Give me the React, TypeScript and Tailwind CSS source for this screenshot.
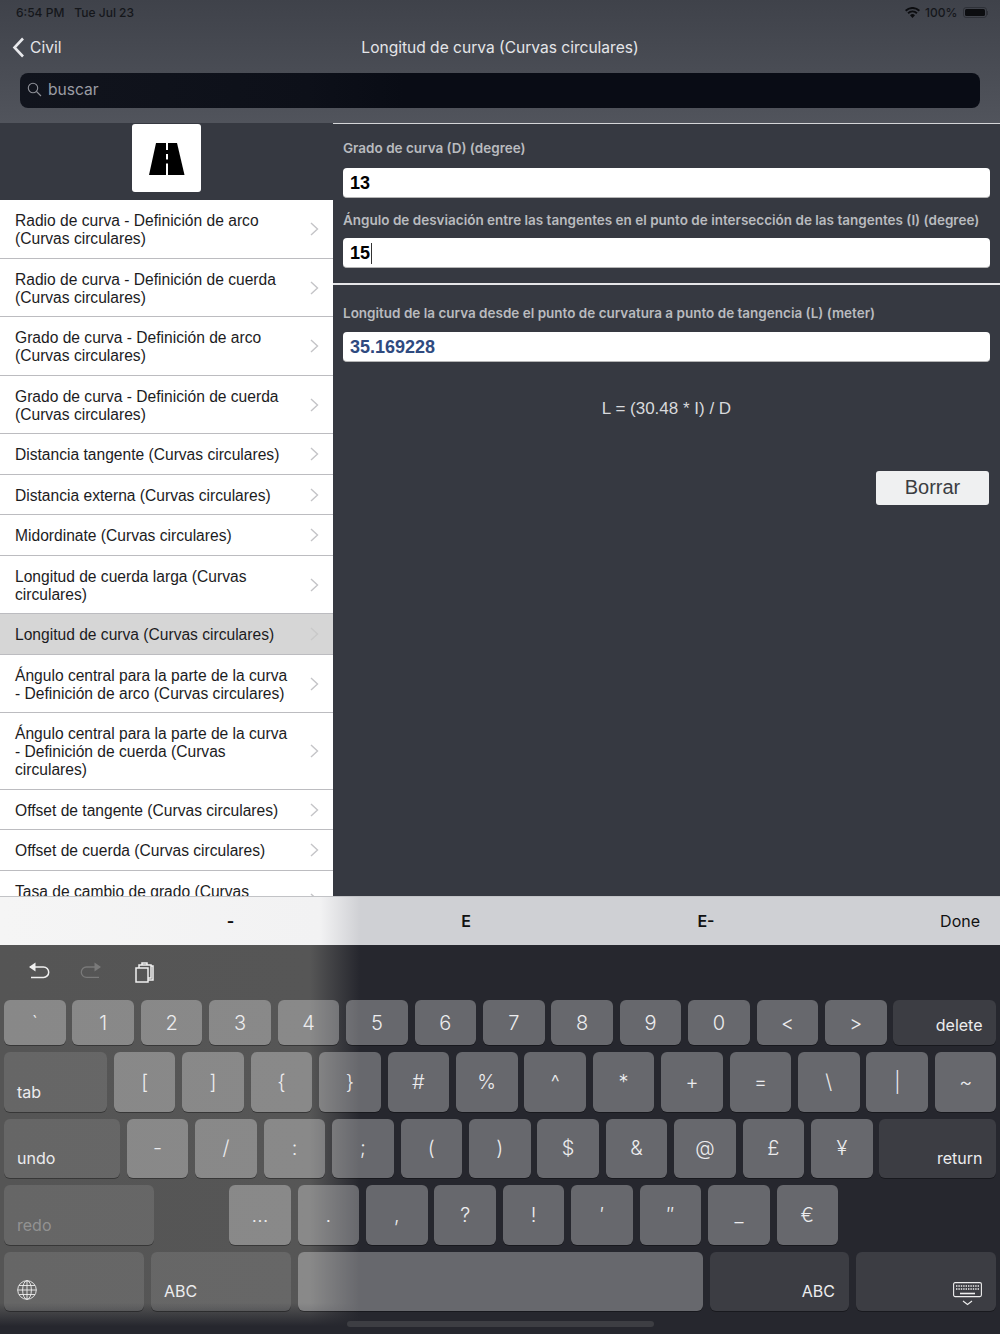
import { ReactNode } from 'react'

const listItems = [
  { label: 'Radio de curva - Definición de arco\n(Curvas circulares)', h: 'h-[59px]' },
  { label: 'Radio de curva - Definición de cuerda\n(Curvas circulares)', h: 'h-[58px]' },
  { label: 'Grado de curva - Definición de arco\n(Curvas circulares)', h: 'h-[59px]' },
  { label: 'Grado de curva - Definición de cuerda\n(Curvas circulares)', h: 'h-[58px]' },
  { label: 'Distancia tangente (Curvas circulares)', h: 'h-[41px]' },
  { label: 'Distancia externa (Curvas circulares)', h: 'h-[40px]' },
  { label: 'Midordinate (Curvas circulares)', h: 'h-[41px]' },
  { label: 'Longitud de cuerda larga (Curvas\ncirculares)', h: 'h-[58px]' },
  { label: 'Longitud de curva (Curvas circulares)', h: 'h-[41px]', active: true },
  { label: 'Ángulo central para la parte de la curva\n- Definición de arco (Curvas circulares)', h: 'h-[58px]' },
  { label: 'Ángulo central para la parte de la curva\n- Definición de cuerda (Curvas\ncirculares)', h: 'h-[77px]' },
  { label: 'Offset de tangente (Curvas circulares)', h: 'h-[40px]' },
  { label: 'Offset de cuerda (Curvas circulares)', h: 'h-[41px]' },
  { label: 'Tasa de cambio de grado (Curvas\ncirculares)', h: 'h-[58px]' },
]

function ListRow({ label, h, active }: { label: string; h: string; active?: boolean }) {
  return (
    <div className={`${h} shrink-0 flex items-center justify-between pl-[15px] pr-[14px] pt-[2px] border-b border-[#bcbcc0] ${active ? 'bg-[#d6d6d6]' : 'bg-white'}`}>
      <span className="whitespace-pre-line text-[15.6px] leading-[18px] text-[#1c1c1e] font-['Liberation_Sans',sans-serif]">{label}</span>
      <svg width="9" height="14" viewBox="0 0 9 14" fill="none" className="shrink-0 -mt-[2px]">
        <path d="M1 1l6.5 6L1 13" stroke={active ? '#c9c9c9' : '#c4c4c7'} strokeWidth="1.4" />
      </svg>
    </div>
  )
}

function Field({ label, value, blue, caret, inputGap }: { label: string; value: string; blue?: boolean; caret?: boolean; inputGap: string }) {
  return (
    <div>
      <div className="text-[13.5px] leading-[16px] font-semibold text-[#b9bbbf]">{label}</div>
      <div className={`${inputGap} h-[30px] pt-[2px] rounded-[4px] bg-white border-b border-[#b5b5b5] pl-[7px] flex items-center text-[18px] font-bold font-['Liberation_Sans',sans-serif] ${blue ? 'text-[#2f4a7f]' : 'text-black'}`}>
        {value}
        {caret && <span className="ml-px w-px h-[21px] bg-[#333]" />}
      </div>
    </div>
  )
}

function Key({ w, children, dark, dim, pos = 'center', h = 'h-[59.5px]' }: { w: string; children?: ReactNode; dark?: boolean; dim?: boolean; pos?: 'center' | 'left' | 'right'; h?: string }) {
  const place =
    pos === 'center' ? 'items-center justify-center text-[20px] font-light' :
    pos === 'left' ? 'items-end justify-start pl-[13px] pb-[8px] text-[16px]' :
    'items-end justify-end pr-[14px] pb-[8px] text-[16px]'
  return (
    <div className={`${w} ${h} shrink-0 flex rounded-[6px] shadow-[0_1px_0_rgba(0,0,0,0.35)] ${dark ? 'bg-white/[0.1]' : 'bg-white/[0.3]'} ${place} ${dim ? 'text-white/30' : 'text-[#ececee]'}`}>
      {children}
    </div>
  )
}

function KeyRow({ keys }: { keys: string[] }) {
  return (
    <>
      {keys.map((k) => (
        <Key key={k} w="w-[61.6px]">{k}</Key>
      ))}
    </>
  )
}

function RoadLogo() {
  return (
    <svg width="36" height="32" viewBox="0 0 36 32" className="mt-[1px]">
      <path d="M7 0h21l7.5 32H0z" fill="#000" />
      <path d="M17 0h2v7h-2zM17 11h2v5.5h-2zM17 20.5h2V32h-2z" fill="#fff" />
    </svg>
  )
}

function KeyboardIcon() {
  return (
    <svg width="29" height="24" viewBox="0 0 29 24" fill="none" stroke="#eee" className="-mb-[3px]">
      <rect x="0.6" y="0.6" width="27.8" height="14" rx="1.5" strokeWidth="1.1" />
      <path d="M3 4h23M3 7h23" strokeWidth="1.6" strokeDasharray="1.4 1" />
      <path d="M7 11.5h15" strokeWidth="1.6" />
      <path d="M10 19l4.5 3.5L19 19" strokeWidth="1.1" />
    </svg>
  )
}

export default function App() {
  return (
    <div className="w-[1000px] h-[1334px] overflow-hidden flex flex-col bg-[#363941] font-['Inter',sans-serif]">
      {/* nav bar */}
      <header className="h-[123px] shrink-0 bg-gradient-to-b from-[#3f424a] to-[#51545c] flex flex-col">
        <div className="h-[24px] pt-[1px] flex items-center justify-between pl-[16px] pr-[12px] text-[12px] font-medium text-[#15171b]">
          <div className="flex gap-[10px]"><span>6:54 PM</span><span>Tue Jul 23</span></div>
          <div className="flex items-center gap-[5px]">
            <svg width="15" height="11" viewBox="0 0 15 11" fill="#0c0d10">
              <path d="M7.5 11L5 8.2a3.6 3.6 0 015 0zM3.7 6.9L2.4 5.5a7.3 7.3 0 0110.2 0l-1.3 1.4a5.4 5.4 0 00-7.6 0zM1.3 4.4L0 3a10.8 10.8 0 0115 0l-1.3 1.4a9 9 0 00-12.4 0z" />
            </svg>
            <span>100%</span>
            <div className="flex items-center">
              <div className="w-[24px] h-[11px] rounded-[3px] border border-[#15171b]/40 p-[1px]"><div className="w-full h-full rounded-[1.5px] bg-[#0c0d10]" /></div>
              <div className="w-[1.5px] h-[4px] bg-[#15171b]/40" />
            </div>
          </div>
        </div>
        <div className="h-[49px] pb-[2px] flex items-center relative">
          <div className="flex items-center pl-[12px] gap-[5px] text-[15.6px] text-[#e4e5e8]">
            <svg width="13" height="21" viewBox="0 0 13 21" fill="none"><path d="M11 1.5L2.5 10.5l8.5 9" stroke="#e8e9ec" strokeWidth="2.6" /></svg>
            Civil
          </div>
          <div className="absolute inset-x-0 text-center text-[15.55px] text-[#e4e5e8]">Longitud de curva (Curvas circulares)</div>
        </div>
        <div className="mx-[20px] h-[35px] pb-[2px] rounded-[8px] bg-[linear-gradient(90deg,#11141d_0%,#0d1019_30%,#090c15_40%)] flex items-center pl-[7px] gap-[6px] text-[15.6px] text-[#9a9ca3]">
          <svg width="15" height="15" viewBox="0 0 15 15" fill="none" stroke="#8e9097" strokeWidth="1.1"><circle cx="6" cy="6" r="4.7" /><path d="M9.5 9.5l4.5 4.5" /></svg>
          buscar
        </div>
      </header>

      {/* main area */}
      <main className="h-[773px] shrink-0 flex overflow-hidden">
        <aside className="w-[333px] shrink-0 flex flex-col">
          <div className="h-[77px] shrink-0 flex justify-center pt-px bg-[#363941]">
            <div className="w-[69px] h-[68px] rounded-[3px] bg-white flex items-center justify-center"><RoadLogo /></div>
          </div>
          {listItems.map((item) => (
            <ListRow key={item.label} {...item} />
          ))}
        </aside>
        <section className="flex-1 flex flex-col border-t border-[#d5d6d8]">
          <div className="px-[10px] pt-[16px] pb-[15px] flex flex-col gap-[14px]">
            <Field label="Grado de curva (D) (degree)" value="13" inputGap="mt-[12px]" />
            <Field label="Ángulo de desviación entre las tangentes en el punto de intersección de las tangentes (I) (degree)" value="15" caret inputGap="mt-[10px]" />
          </div>
          <div className="h-[2px] bg-[#e6e6e8]" />
          <div className="px-[10px] pt-[20px]">
            <Field label="Longitud de la curva desde el punto de curvatura a punto de tangencia (L) (meter)" value="35.169228" blue inputGap="mt-[11px]" />
            <div className="mt-[36px] text-center text-[17px] leading-[22px] text-[#d8d9dc] font-['Liberation_Sans',sans-serif]">L = (30.48 * I) / D</div>
            <div className="mt-[51px] pr-[1px] flex justify-end">
              <div className="w-[113px] h-[34px] pb-[2px] rounded-[3px] bg-[#eff0f1] flex items-center justify-center text-[20px] text-[#3b3d42] font-['Liberation_Sans',sans-serif]">Borrar</div>
            </div>
          </div>
        </section>
      </main>

      {/* accessory bar */}
      <div className="h-[49px] shrink-0 border-t border-[#c2c3c6] pl-[112px] grid grid-cols-[237px_234px_246px_1fr] items-center text-[16px] font-medium text-[#111] bg-[linear-gradient(90deg,#f5f5f5_0%,#f2f2f3_32%,#cfd0d4_36%,#cfd0d4_100%)]">
        <span className="text-center font-bold">-</span>
        <span className="text-center font-semibold">E</span>
        <span className="text-center font-semibold">E-</span>
        <span className="text-right pr-[20px] font-normal">Done</span>
      </div>

      {/* keyboard */}
      <div className="flex-1 flex flex-col px-[4px] bg-[linear-gradient(180deg,rgba(38,39,46,0)_0%,rgba(38,39,46,0)_92%,#26272e_98%),linear-gradient(90deg,#555555_0%,#565656_31%,#26272e_36%,#26272e_100%)]">
        <div className="h-[55px] shrink-0 flex items-center pl-[24px] gap-[26px] pb-[1px]">
          <svg width="24" height="22" viewBox="0 0 24 22" fill="none" stroke="#f0f0f0" strokeWidth="1.5">
            <path d="M2 6h13.5a5.2 5.2 0 010 10.4H3" />
            <path d="M7.5 1.5v9L1 6z" fill="#f0f0f0" stroke="none" />
          </svg>
          <svg width="24" height="22" viewBox="0 0 24 22" fill="none" stroke="#7a7a7a" strokeWidth="1.3">
            <path d="M22 6H8.5a5.2 5.2 0 000 10.4H21" />
            <path d="M16.5 1.5v9L23 6z" fill="#7a7a7a" stroke="none" />
          </svg>
          <svg width="20" height="21" viewBox="0 0 20 21" fill="none" stroke="#f0f0f0" strokeWidth="1.5" className="ml-[7px]">
            <rect x="1" y="6" width="12" height="14" />
            <path d="M4 6V3h12v13h-3M7 3V1h5v2M16 4h2v14h-5" />
          </svg>
        </div>
        <div className="flex flex-col gap-[7px]">
          <div className="flex gap-[6.83px]">
            <Key w="w-[61.6px]" h="h-[45px]">`</Key>
            {['1', '2', '3', '4', '5', '6', '7', '8', '9', '0', '<', '>'].map((k) => (
              <Key key={k} w="w-[61.6px]" h="h-[45px]">{k}</Key>
            ))}
            <Key w="w-[103px]" h="h-[45px]" dark pos="right">delete</Key>
          </div>
          <div className="flex gap-[6.83px]">
            <Key w="w-[103px]" dark pos="left">tab</Key>
            <KeyRow keys={['[', ']', '{', '}', '#', '%', '^', '*', '+', '=', '\\', '|', '~']} />
          </div>
          <div className="flex gap-[6.83px]">
            <Key w="w-[116px]" dark pos="left">undo</Key>
            <KeyRow keys={['-', '/', ':', ';', '(', ')', '$', '&', '@', '£', '¥']} />
            <Key w="w-[117px]" dark pos="right">return</Key>
          </div>
          <div className="flex gap-[6.83px]">
            <Key w="w-[150px]" dark dim pos="left">redo</Key>
            <div className="w-[61.5px] shrink-0" />
            <KeyRow keys={['…', '.', ',', '?', '!', '′', '″', '_', '€']} />
          </div>
          <div className="flex gap-[7px]">
            <Key w="w-[140px]" dark pos="left">
              <svg width="20" height="20" viewBox="0 0 20 20" fill="none" stroke="#eee" strokeWidth="0.9" className="mb-[3px]">
                <circle cx="10" cy="10" r="9.3" />
                <ellipse cx="10" cy="10" rx="4.4" ry="9.3" />
                <path d="M10 .7v18.6M.7 10h18.6M2 5.5h16M2 14.5h16" />
              </svg>
            </Key>
            <Key w="w-[140px]" dark pos="left">ABC</Key>
            <Key w="w-[405px]" />
            <Key w="w-[139px]" dark pos="right">ABC</Key>
            <Key w="w-[140px]" dark pos="right"><KeyboardIcon /></Key>
          </div>
        </div>
        <div className="mt-[10px] mx-auto w-[307px] h-[6px] rounded-full bg-[#3d3e43]" />
      </div>
    </div>
  )
}
